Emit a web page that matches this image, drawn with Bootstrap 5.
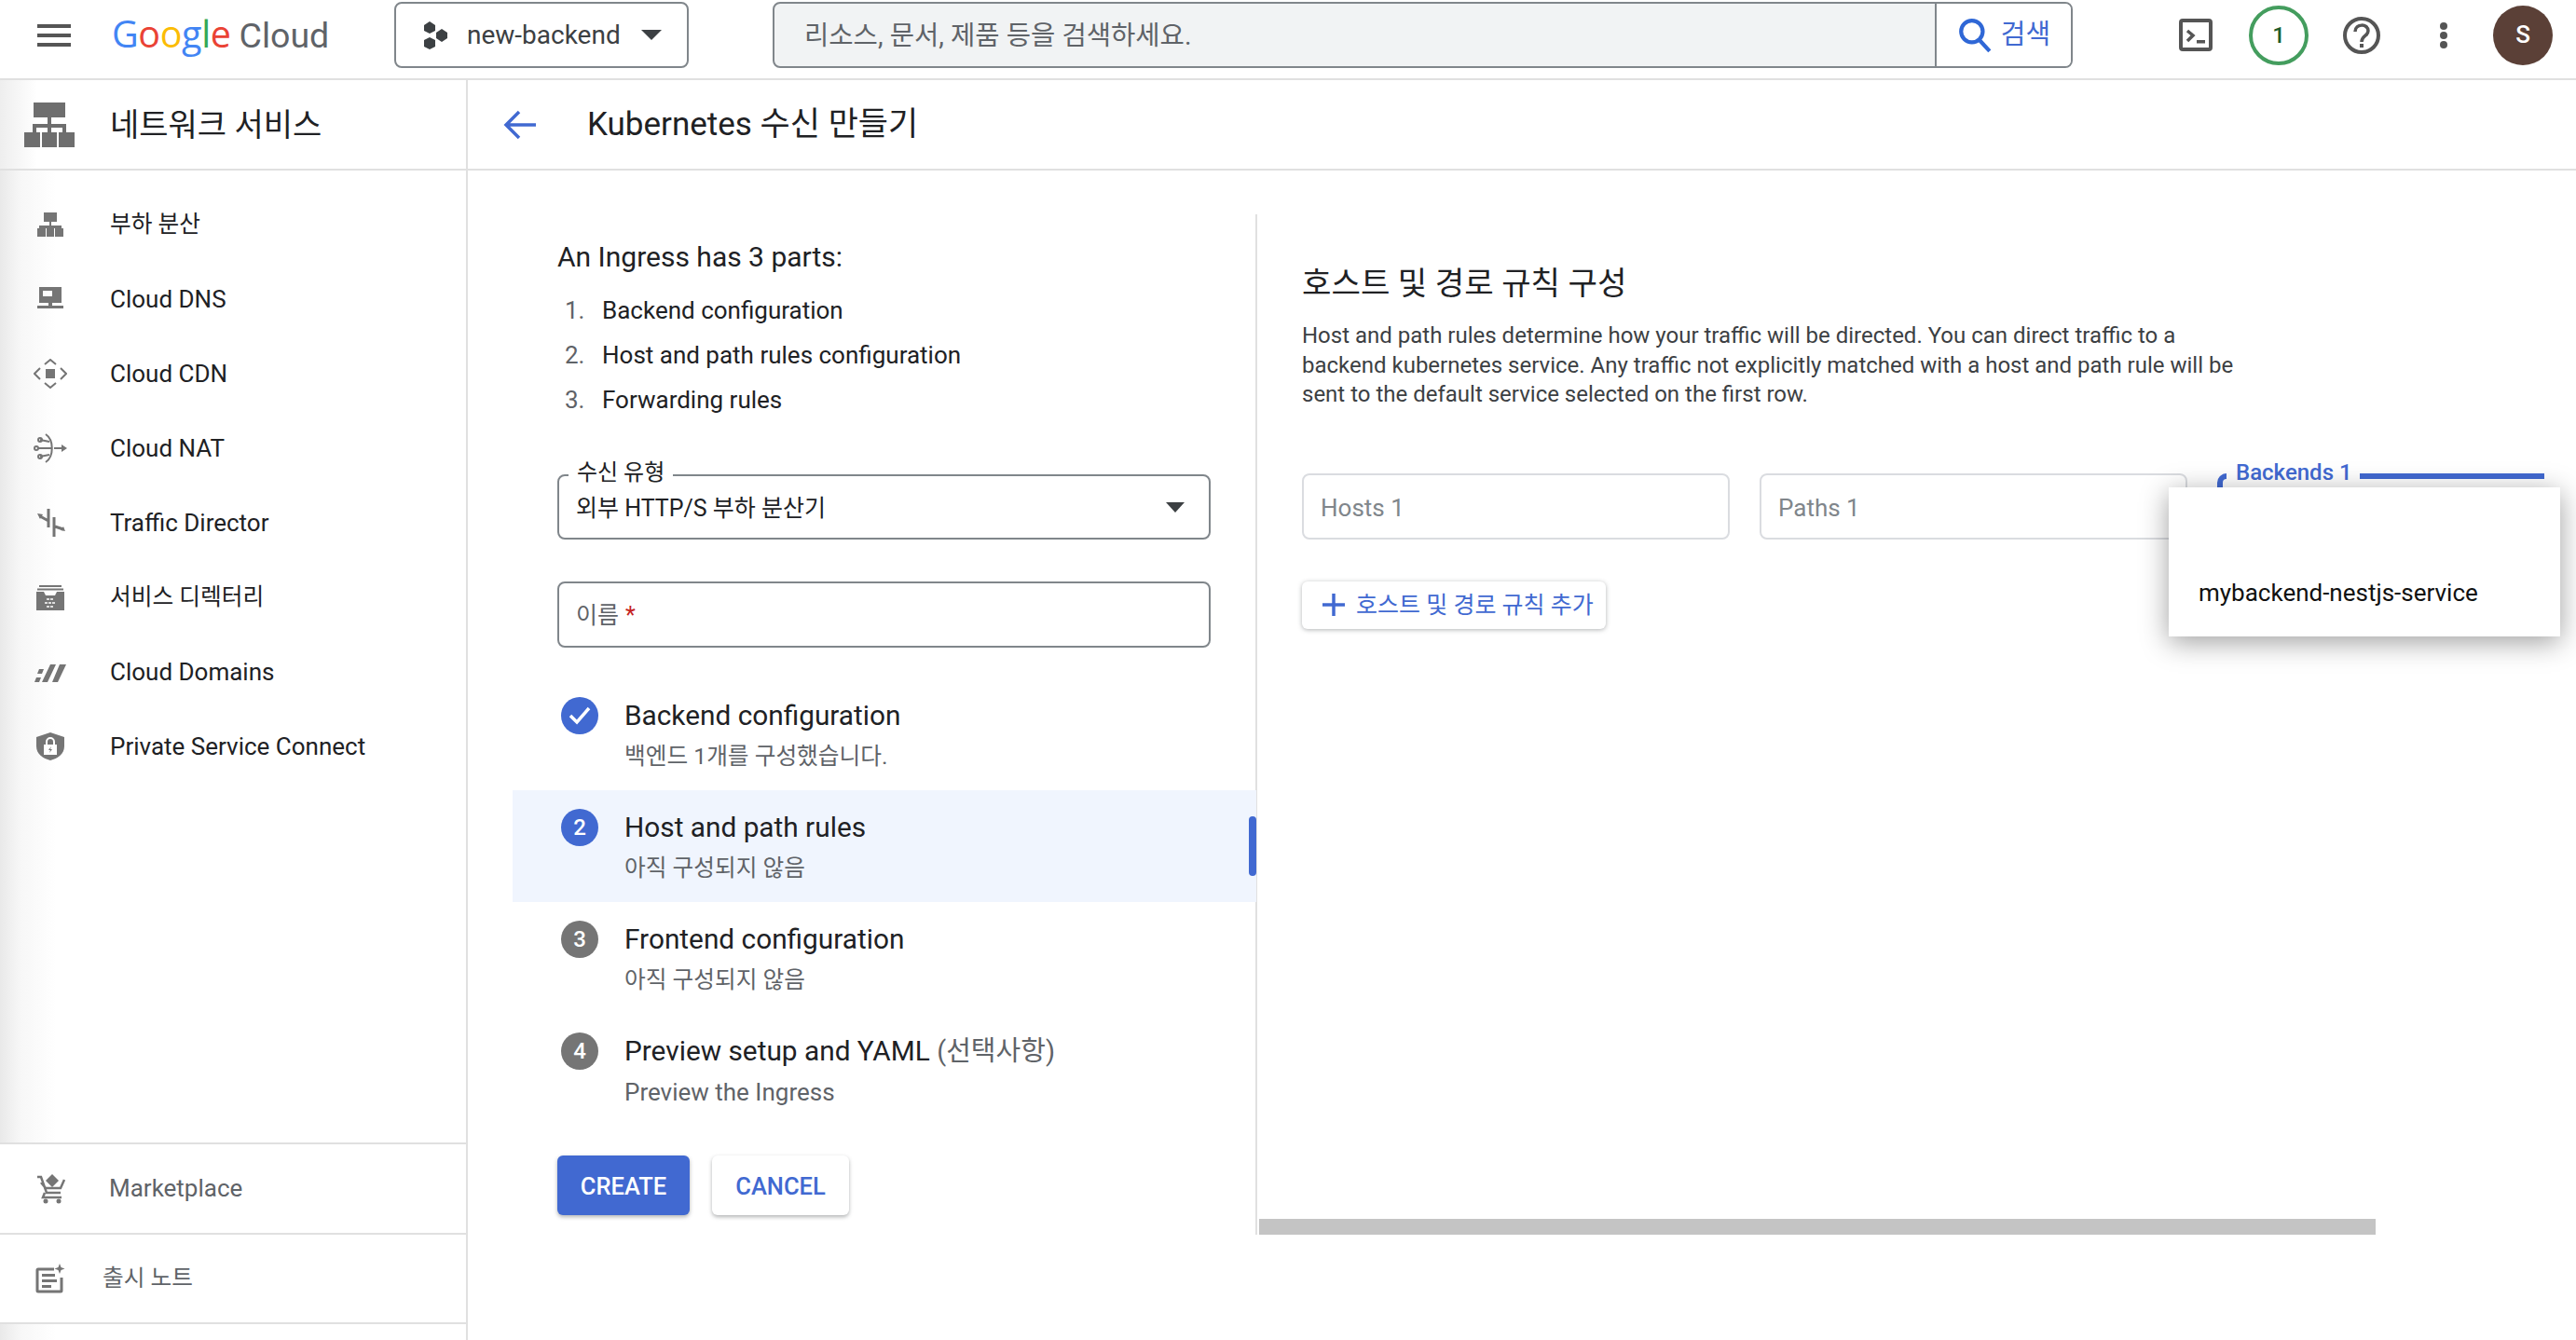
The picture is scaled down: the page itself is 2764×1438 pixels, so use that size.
<!DOCTYPE html>
<html lang="ko">
<head>
<meta charset="utf-8">
<title>Kubernetes 수신 만들기</title>
<link href="https://cdn.jsdelivr.net/npm/bootstrap@5.3.0/dist/css/bootstrap.min.css" rel="stylesheet">
<style>
:root{--gb:#4169d1;--line:#e0e0e0;--ff:Roboto,"Noto Sans CJK KR",sans-serif;}
html,body{height:100%;overflow:hidden}
body{font-family:var(--ff);font-size:26px;color:#202124;background:#fff}
.ko{font-size:24.7px}
.app-shell{width:2764px;height:1438px}
.tbar{height:86px;border-bottom:2px solid var(--line);flex:none;padding-bottom:9px}
.menu-btn{margin-left:40px;width:36px;height:24px;border-top:4px solid #555;border-bottom:4px solid #555;position:relative;flex:none}
.menu-btn::after{content:"";position:absolute;left:0;right:0;top:6px;height:4px;background:#555}
.glogo{margin-left:44px;width:303px;flex:none;line-height:1;white-space:nowrap}
.g-word{font-family:"Open Sans",var(--ff);font-size:39.5px;letter-spacing:-.4px}
.c-word{font-size:37.5px;color:#5f6368;margin-left:9px}
.proj{width:316px;height:71px;border:2px solid #80868b;border-radius:8px;padding-left:28px;font-size:28px;color:#3c4043;flex:none}
.proj-name{margin-left:20px;margin-right:22px}
.tri{width:0;height:0;border-left:11px solid transparent;border-right:11px solid transparent;border-top:11px solid #3c4043;display:block;flex:none}
.sbox{margin-left:90px;width:1395px;height:71px;border:2px solid #80868b;border-radius:8px;overflow:hidden;background:#f1f3f4;flex:none}
.sbox .sinput{background:transparent;border:0;border-radius:0;box-shadow:none;padding:0 32px;font-size:28.6px;height:100%;color:#5f6368}
.sinput::placeholder{color:#5f6368;opacity:1}
.sbtn{width:146px;flex:none;background:#fff;border-left:2px solid #80868b;color:var(--gb);font-size:29px;gap:9px}
.tools{margin-left:114px}
.t-term{width:36px;height:35px}
.quota{width:64px;height:64px;border:4px solid #449d5e;border-radius:50%;margin-left:39px;color:#1d5c2c;font-size:24px;font-weight:500}
.t-help{width:40px;height:40px;margin-left:37px}
.t-dots{width:10px;height:28px;margin-left:63px}
.ava{width:64px;height:64px;border-radius:50%;background:#5b4037;color:#fff;margin-left:48px;font-size:26px;font-weight:500}
.work{min-height:0}
.side{width:502px;flex:none;border-right:2px solid var(--line);background:linear-gradient(90deg,#e9e9e9 0,#f7f7f7 22px,#fff 60px)}
.shead{height:97px;border-bottom:2px solid var(--line);flex:none;background:linear-gradient(90deg,#eee 0,#fff 40px)}
.shead svg{margin-left:26px;width:54px;height:48px;margin-right:38px}
.shead span{font-size:34px;color:#202124;padding-top:2px}
.snav{padding-top:18px}
.sitem{height:80px;color:#202124}
.sico{width:36px;height:32px;margin-left:36px;margin-right:46px;flex:none;fill:#757575;stroke:none}
.sfoot{height:97px;border-top:2px solid var(--line);color:#5f6368;background:#fff}
.sfoot .sico{margin-right:45px}
.sfoot .rel{margin-left:-7px}
.sfoot-end{border-bottom:2px solid var(--line);margin-bottom:17px;height:98px}
.mhead{height:97px;border-bottom:2px solid var(--line);flex:none}
.mhead svg{margin-left:38px;width:36px;height:32px;margin-right:54px}
.mhead span{font-size:35px;color:#202124;padding-top:2px}
.mbody{min-height:0;padding-top:47px}
.lcol{width:847px;flex:none;border-right:2px solid var(--line);padding-left:48px;height:1095px}
.lpad{padding-left:48px;width:749px}
.intro{padding-top:26px;font-size:30px;line-height:40px;color:#202124}
.olist{margin:13px 0 0;padding:0;list-style:none}
.olist li{height:48px;line-height:48px;display:flex}
.olist b{font-weight:400;color:#5f6368;width:48px;padding-left:8px}
.fbox{border:2px solid #80868b;border-radius:8px;height:71px;padding:0 18px;position:relative;font-size:25px}
.fbox-sel{margin-top:56px;height:70px}
.fbox-sel .tri{border-left-width:10px;border-right-width:10px;margin-right:8px}
.flab{position:absolute;top:-19px;left:10px;background:#fff;padding:0 9px;line-height:30px;font-size:24px}
.ftxt{padding-top:4px}
.fbox-name{margin-top:45px;color:#5f6368;padding-top:2px}
.req{color:#c5221f;margin-left:7px}
.stepper{margin-top:33px}
.srow{height:120px;padding:20px 0 0 52px;position:relative;width:798px}
.srow.on{background:#f0f5fe}
.srow.on::after{content:"";position:absolute;right:0;top:28px;width:8px;height:64px;background:var(--gb);border-radius:4px}
.dot{width:40px;height:40px;border-radius:50%;background:#757575;color:#fff;font-size:24px;font-weight:500;margin-right:28px;flex:none}
.dot.blue{background:var(--gb)}
.st-t{font-size:29.8px;line-height:40px;color:#202124}
.st-s{line-height:40px;margin-top:4px;color:#5f6368}
.opt{color:#5f6368;font-size:29px}
.acts{margin-top:32px}
.acts .btn{height:64px;font-size:25.5px;font-weight:500;border-radius:6px;border:0;padding:2px 0 0;box-shadow:0 2px 4px rgba(60,64,67,.4)}
.b-create{width:142px;background:var(--gb);color:#fff}
.b-cancel{width:147px;margin-left:24px;background:#fff;color:var(--gb)}
.rcol{min-width:0;padding-left:48px;height:1095px}
.rcol h2{font-size:34.2px;line-height:44px;font-weight:400;margin:52px 0 19px;color:#202124}
.rcol p{font-size:24px;line-height:31.6px;width:1010px;margin:0 0 68px;color:#3c4043}
.rfields{gap:32px}
.rfields .form-control{width:459px;height:71px;border:2px solid #dadce0;border-radius:8px;padding:3px 18px 0;font-size:26px;box-shadow:none}
.rfields .form-control::placeholder{color:#80868b;opacity:1}
.bk{width:351px;position:relative;height:71px}
.bk-corner{width:10px;height:15px;border-left:6px solid var(--gb);border-top:6px solid var(--gb);border-top-left-radius:10px;flex:none}
.bk-lab{color:var(--gb);font-weight:500;font-size:24px;line-height:30px;margin:-16px 8px 0 10px;white-space:nowrap}
.bk-line{height:6px;background:var(--gb);flex:1}
.bk-pop{position:absolute;left:-52px;top:15px;width:420px;height:160px;background:#fff;padding:93px 0 0 32px;line-height:40px;color:#111;box-shadow:0 6px 28px rgba(0,0,0,.38);z-index:5}
.b-add{width:326px;height:51px;margin-top:45px;background:#fff;border:0;border-radius:6px;color:var(--gb);font-size:25px;box-shadow:0 1px 5px rgba(60,64,67,.4);padding:0 0 0 20px}
.b-add svg{width:28px;height:28px;margin-right:10px}
.hscroll{margin-left:-46px;margin-top:auto;width:1198px;height:17px;background:#c4c4c4;flex:none}
</style>
</head>
<body>
<div class="app-shell d-flex flex-column">
  <header class="tbar d-flex align-items-center">
    <div class="menu-btn"></div>
    <div class="glogo"><span class="g-word"><span style="color:#4285f4">G</span><span style="color:#ea4335">o</span><span style="color:#fbbc05">o</span><span style="color:#4285f4">g</span><span style="color:#34a853">l</span><span style="color:#ea4335">e</span></span><span class="c-word">Cloud</span></div>
    <div class="proj d-flex align-items-center">
      <svg width="28" height="30" viewBox="0 0 28 30" fill="#3c4043"><polygon points="8,0 14,4 14,10 8,13 2,10 2,4"/><polygon points="8,17 14,20 14,27 8,30 2,27 2,20"/><polygon points="21,8 27,12 27,18 21,22 15,18 15,12"/></svg>
      <span class="proj-name">new-backend</span><i class="tri"></i>
    </div>
    <div class="sbox d-flex">
      <input class="form-control sinput" placeholder="리소스, 문서, 제품 등을 검색하세요.">
      <div class="sbtn d-flex align-items-center justify-content-center">
        <svg width="38" height="38" viewBox="0 0 36 36" fill="none" stroke="#2f67d6" stroke-width="4"><circle cx="15" cy="14" r="11"/><path d="M22 22l11 12"/></svg><span>검색</span>
      </div>
    </div>
    <div class="tools d-flex align-items-center">
      <svg class="t-term" viewBox="0 0 36 35"><rect x="2" y="2" width="32" height="31" rx="2" fill="none" stroke="#555" stroke-width="4"/><path d="M9 13l6 5-6 6" fill="none" stroke="#555" stroke-width="3.5"/><rect x="19" y="23" width="9" height="3.5" fill="#555"/></svg>
      <div class="quota d-flex align-items-center justify-content-center">1</div>
      <svg class="t-help" viewBox="0 0 40 40" fill="none"><circle cx="20" cy="20" r="18" stroke="#555" stroke-width="4"/><path d="M13 16c0-9 14-9 14-1 0 6-7 5-7 12" stroke="#555" stroke-width="3.5"/><rect x="18" y="29" width="4" height="4" fill="#555"/></svg>
      <svg class="t-dots" viewBox="0 0 10 28" fill="#555"><circle cx="5" cy="4" r="4"/><circle cx="5" cy="14" r="4"/><circle cx="5" cy="24" r="4"/></svg>
      <div class="ava d-flex align-items-center justify-content-center">S</div>
    </div>
  </header>

  <div class="work d-flex flex-grow-1">
    <aside class="side d-flex flex-column">
      <div class="shead d-flex align-items-center">
        <svg viewBox="0 0 54 48" fill="#6e6e6e"><rect x="10" y="0" width="34" height="16"/><rect x="25" y="16" width="4" height="9"/><rect x="9" y="23" width="36" height="4"/><rect x="9" y="23" width="4" height="9"/><rect x="25" y="23" width="4" height="9"/><rect x="41" y="23" width="4" height="9"/><rect x="0" y="32" width="17" height="16"/><rect x="19" y="32" width="16" height="16"/><rect x="37" y="32" width="17" height="16"/></svg>
        <span>네트워크 서비스</span>
      </div>
      <nav class="snav">
        <div class="sitem d-flex align-items-center">
          <svg class="sico" viewBox="0 0 36 32"><rect x="11" y="3" width="14" height="10"/><rect x="17" y="13" width="2" height="5"/><rect x="6" y="17" width="24" height="3"/><rect x="4" y="20" width="9" height="9"/><rect x="14" y="20" width="8" height="9" /><rect x="23" y="20" width="9" height="9"/></svg><span class="ko">부하 분산</span>
        </div>
        <div class="sitem d-flex align-items-center">
          <svg class="sico" viewBox="0 0 36 32"><path d="M6 3h24v17H20v3h12v3H4v-3h12v-3H6zM10 7v6h10V7z"/></svg><span>Cloud DNS</span>
        </div>
        <div class="sitem d-flex align-items-center">
          <svg class="sico" viewBox="0 0 36 32"><rect x="13" y="11" width="10" height="10"/><path d="M12 6l6-5 6 5M12 26l6 5 6-5M7 10l-6 6 6 6M29 10l6 6-6 6" fill="none" stroke="#757575" stroke-width="2"/></svg><span>Cloud CDN</span>
        </div>
        <div class="sitem d-flex align-items-center">
          <svg class="sico" viewBox="0 0 36 32"><g fill="none" stroke="#757575" stroke-width="2"><path d="M13 1c9 6 9 24 0 30"/><path d="M4 16h16M7 7l10 2M7 25l10-2M22 16h10"/><circle cx="3" cy="16" r="2"/><circle cx="7" cy="7" r="2"/><circle cx="7" cy="25" r="2"/></g><path d="M30 12l6 4-6 4z"/></svg><span>Cloud NAT</span>
        </div>
        <div class="sitem d-flex align-items-center">
          <svg class="sico" viewBox="0 0 36 32"><g fill="none" stroke="#757575" stroke-width="3"><path d="M16 1v20M7 9l9 5M22 10v21M23 20l9 3"/></g><path d="M4 6l6 1-3 5zM32 20l2 5-5-1z"/></svg><span>Traffic Director</span>
        </div>
        <div class="sitem d-flex align-items-center">
          <svg class="sico" viewBox="0 0 36 32"><path d="M6 3h24v2H6zM4 6.500h28v2H4zM3 10h8l2 4h10l2-4h8v20H3z"/><path d="M14 18h8M12 22h12M14 26h8" stroke="#fff" stroke-width="1.500" stroke-dasharray="3 1"/></svg><span class="ko">서비스 디렉터리</span>
        </div>
        <div class="sitem d-flex align-items-center">
          <svg class="sico" viewBox="0 0 36 32"><path d="M6 13h5l-2 5H4zM3 22h5l-2 5H1zM18 8h6l-9 19H9zM28 8h7l-9 19h-6z"/></svg><span>Cloud Domains</span>
        </div>
        <div class="sitem d-flex align-items-center">
          <svg class="sico" viewBox="0 0 36 32"><path d="M18 1l15 5v10c0 8-7 13-15 15C10 29 3 24 3 16V6z"/><path d="M11 14h14v11H11z" fill="#fff"/><path d="M14 14v-3a4 4 0 018 0v3" fill="none" stroke="#fff" stroke-width="2"/><path d="M19 16l-3 4h2l-1 3 3-4h-2z"/></svg><span>Private Service Connect</span>
        </div>
      </nav>
      <div class="sfoot d-flex align-items-center mt-auto">
        <svg class="sico" viewBox="0 0 36 32"><path d="M20 0l7 7-7 7-7-7z"/><g fill="none" stroke="#757575" stroke-width="2.500"><path d="M4 3h4l6 17h15M8 9l5 6h16l4-9M12 20l-2 5h20"/></g><circle cx="13" cy="29" r="2.500"/><circle cx="27" cy="29" r="2.500"/></svg><span>Marketplace</span>
      </div>
      <div class="sfoot sfoot-end d-flex align-items-center">
        <svg class="sico" viewBox="0 0 36 32"><path d="M22 6H5a1 1 0 00-1 1v22a1 1 0 001 1h24a1 1 0 001-1V15" fill="none" stroke="#757575" stroke-width="3"/><rect x="9" y="11" width="14" height="3"/><rect x="9" y="17" width="16" height="3"/><rect x="9" y="23" width="10" height="3"/><path d="M28 0l1.500 4 4 1.500-4 1.500-1.500 4-1.500-4-4-1.500 4-1.500z"/></svg><span class="rel ko">출시 노트</span>
      </div>
    </aside>

    <main class="flex-grow-1 d-flex flex-column" style="min-width:0">
      <div class="mhead d-flex align-items-center">
        <svg viewBox="0 0 36 32" fill="none" stroke="#4169d1" stroke-width="3.500"><path d="M35 16H3M17 2L3 16l14 14"/></svg>
        <span>Kubernetes 수신 만들기</span>
      </div>
      <div class="mbody d-flex flex-grow-1">
        <section class="lcol d-flex flex-column">
          <div class="lpad">
            <div class="intro">An Ingress has 3 parts:</div>
            <ol class="olist">
              <li><b>1.</b><span>Backend configuration</span></li>
              <li><b>2.</b><span>Host and path rules configuration</span></li>
              <li><b>3.</b><span>Forwarding rules</span></li>
            </ol>
            <div class="fbox fbox-sel d-flex align-items-center justify-content-between">
              <span class="flab">수신 유형</span>
              <span class="ftxt">외부 HTTP/S 부하 분산기</span>
              <i class="tri"></i>
            </div>
            <div class="fbox fbox-name d-flex align-items-center"><span>이름</span><span class="req">*</span></div>
          </div>
          <div class="stepper">
            <div class="srow d-flex">
              <div class="dot blue d-flex align-items-center justify-content-center"><svg width="28" height="24" viewBox="0 0 28 24" fill="none" stroke="#fff" stroke-width="3.500"><path d="M4 12l7 7L24 4"/></svg></div>
              <div><div class="st-t">Backend configuration</div><div class="st-s ko">백엔드 1개를 구성했습니다.</div></div>
            </div>
            <div class="srow on d-flex">
              <div class="dot blue d-flex align-items-center justify-content-center">2</div>
              <div><div class="st-t">Host and path rules</div><div class="st-s ko">아직 구성되지 않음</div></div>
            </div>
            <div class="srow d-flex">
              <div class="dot d-flex align-items-center justify-content-center">3</div>
              <div><div class="st-t">Frontend configuration</div><div class="st-s ko">아직 구성되지 않음</div></div>
            </div>
            <div class="srow d-flex">
              <div class="dot d-flex align-items-center justify-content-center">4</div>
              <div><div class="st-t">Preview setup and YAML <span class="opt">(선택사항)</span></div><div class="st-s">Preview the Ingress</div></div>
            </div>
          </div>
          <div class="acts lpad d-flex">
            <button class="btn b-create">CREATE</button>
            <button class="btn b-cancel">CANCEL</button>
          </div>
        </section>
        <section class="rcol flex-grow-1 d-flex flex-column align-items-start">
          <h2>호스트 및 경로 규칙 구성</h2>
          <p>Host and path rules determine how your traffic will be directed. You can direct traffic to a backend kubernetes service. Any traffic not explicitly matched with a host and path rule will be sent to the default service selected on the first row.</p>
          <div class="rfields d-flex">
            <input class="form-control" placeholder="Hosts 1">
            <input class="form-control" placeholder="Paths 1">
            <div class="bk d-flex align-items-start">
              <i class="bk-corner"></i><span class="bk-lab">Backends 1</span><i class="bk-line"></i>
              <div class="bk-pop">mybackend-nestjs-service</div>
            </div>
          </div>
          <button class="btn b-add d-flex align-items-center">
            <svg viewBox="0 0 28 28" fill="none" stroke="#4169d1" stroke-width="3.500"><path d="M14 2v24M2 14h24"/></svg>호스트 및 경로 규칙 추가
          </button>
          <div class="hscroll"></div>
        </section>
      </div>
    </main>
  </div>
</div>
<script src="https://cdn.jsdelivr.net/npm/bootstrap@5.3.0/dist/js/bootstrap.bundle.min.js"></script>
</body>
</html>
